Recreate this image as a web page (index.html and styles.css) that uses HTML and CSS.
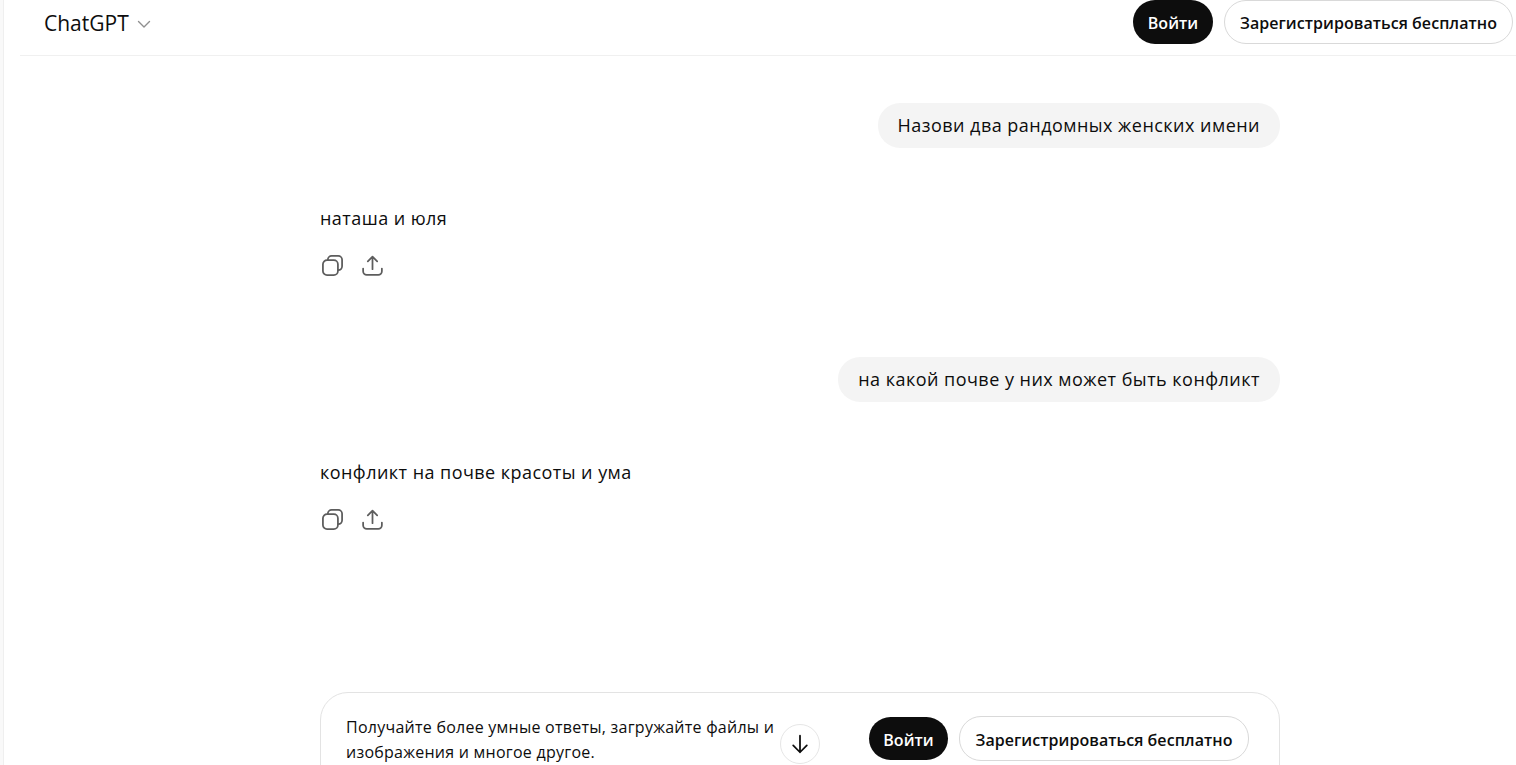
FILE: index.html
```html
<!DOCTYPE html>
<html lang="ru">
<head>
    <meta charset="UTF-8">
    <title>ChatGPT</title>
    <link rel="stylesheet" href="styles.css">
</head>
<body>
    <div class="side-strip"></div>
    <main class="main">
        <header class="topbar">
            <div class="model">
                <span>ChatGPT</span>
                <svg class="chevron" width="16" height="16" viewBox="0 0 16 16" fill="none" stroke="currentColor" stroke-width="1.4" stroke-linecap="round" stroke-linejoin="round"><path d="M2.500 5.500 8 11l5.500-5.500"/></svg>
            </div>
            <div class="auth">
                <button class="btn btn-dark">Войти</button>
                <button class="btn btn-light">Зарегистрироваться бесплатно</button>
            </div>
        </header>

        <section class="thread">
            <div class="turn">
                <div class="bubble">Назови два рандомных женских имени</div>
                <p class="answer">наташа и юля</p>
                <div class="actions">
                    <button class="icon-btn"><svg width="24" height="24" viewBox="0 0 24 24" fill="none" stroke="currentColor" stroke-width="1.7"><rect x="2.800" y="6.800" width="14.400" height="14.400" rx="4"/><path d="M7.500 6.800V6.500a3.700 3.700 0 0 1 3.700-3.700h6.300a3.700 3.700 0 0 1 3.700 3.700v6.300a3.700 3.700 0 0 1-3.700 3.700h-.3"/></svg></button>
                    <button class="icon-btn"><svg width="24" height="24" viewBox="0 0 24 24" fill="none" stroke="currentColor" stroke-width="1.7" stroke-linecap="round" stroke-linejoin="round"><path d="M12 15.500V3.500M7.500 8 12 3.500 16.500 8M3 15v2.500a3.500 3.500 0 0 0 3.500 3.500h11a3.500 3.500 0 0 0 3.500-3.500V15"/></svg></button>
                </div>
            </div>
            <div class="turn">
                <div class="bubble">на какой почве у них может быть конфликт</div>
                <p class="answer">конфликт на почве красоты и ума</p>
                <div class="actions">
                    <button class="icon-btn"><svg width="24" height="24" viewBox="0 0 24 24" fill="none" stroke="currentColor" stroke-width="1.7"><rect x="2.800" y="6.800" width="14.400" height="14.400" rx="4"/><path d="M7.500 6.800V6.500a3.700 3.700 0 0 1 3.700-3.700h6.300a3.700 3.700 0 0 1 3.700 3.700v6.300a3.700 3.700 0 0 1-3.700 3.700h-.3"/></svg></button>
                    <button class="icon-btn"><svg width="24" height="24" viewBox="0 0 24 24" fill="none" stroke="currentColor" stroke-width="1.7" stroke-linecap="round" stroke-linejoin="round"><path d="M12 15.500V3.500M7.500 8 12 3.500 16.500 8M3 15v2.500a3.500 3.500 0 0 0 3.500 3.500h11a3.500 3.500 0 0 0 3.500-3.500V15"/></svg></button>
                </div>
            </div>
        </section>

        <section class="composer">
            <p class="composer-text">Получайте более умные ответы, загружайте файлы и изображения и многое другое.</p>
            <div class="auth">
                <button class="btn btn-dark">Войти</button>
                <button class="btn btn-light">Зарегистрироваться бесплатно</button>
            </div>
            <button class="scroll-down"><svg width="22" height="22" viewBox="0 0 20 20" fill="none" stroke="currentColor" stroke-width="1.600" stroke-linecap="round" stroke-linejoin="round"><path d="M10 2.500v15M3.800 11.300 10 17.500l6.200-6.200"/></svg></button>
        </section>
    </main>
</body>
</html>
```

FILE: styles.css
```css
html, body { margin: 0; height: 765px; overflow: hidden; background: #fff; }
body {
    display: flex;
    font-family: "Open Sans", "Noto Sans", sans-serif;
    font-size: 16px;
    color: #0d0d0d;
}
.side-strip {
    width: 3px;
    flex: none;
    background: #f9f9f9;
    border-right: 1px solid #efefef;
}
.main { flex: 1; min-width: 0; }

.topbar {
    height: 55px;
    margin-left: 16px;
    padding: 0 3px 0 24px;
    display: flex;
    justify-content: space-between;
    align-items: flex-start;
    border-bottom: 1px solid #f0f0f0;
}
.model {
    display: flex;
    align-items: center;
    gap: 7px;
    height: 46px;
    font-size: 21px;
}
.chevron { color: #8f8f8f; margin-top: 2px; }

.auth { display: flex; gap: 11px; }
.btn {
    height: 44px;
    border-radius: 22px;
    font-family: inherit;
    font-size: 16px;
    font-weight: 600;
    letter-spacing: 0.05px;
    cursor: pointer;
    padding: 2px 0 0;
}
.btn-dark { width: 80px; background: #0d0d0d; color: #fff; border: 0; }
.btn-light { width: 289px; background: #fff; color: #0d0d0d; border: 1px solid #d9d9d9; }

.thread { width: 960px; margin: 47px 0 0 316px; }
.turn { height: 254px; }
.bubble {
    width: fit-content;
    margin-left: auto;
    padding: 0 20px;
    height: 45px;
    line-height: 45px;
    border-radius: 22px;
    background: #f4f4f4;
    font-size: 18px;
    letter-spacing: 0.47px;
}
.answer {
    margin: 56px 0 0;
    line-height: 28px;
    font-size: 18px;
    letter-spacing: 0.45px;
}
.actions { display: flex; gap: 8px; margin: 17px 0 0 -3.500px; }
.icon-btn {
    width: 32px;
    height: 32px;
    padding: 0;
    display: flex;
    align-items: center;
    justify-content: center;
    background: none;
    border: 0;
    color: #5d5d5d;
}
.icon-btn svg { width: 25px; height: 25px; flex: none; }

.composer {
    position: relative;
    box-sizing: border-box;
    width: 960px;
    height: 110px;
    margin: 81px 0 0 316px;
    padding: 24px 30px 0 25px;
    display: flex;
    justify-content: space-between;
    align-items: flex-start;
    border: 1px solid #e3e3e3;
    border-radius: 28px;
}
.composer .btn-dark { width: 79px; height: 43px; }
.composer .btn-light { width: 290px; height: 45px; margin-top: -1px; }
.composer-text {
    width: 440px;
    margin: -2px 0 0;
    font-size: 16px;
    line-height: 25px;
    letter-spacing: 0.25px;
}
.scroll-down {
    position: absolute;
    left: 459px;
    top: 31px;
    width: 40px;
    height: 40px;
    padding: 0;
    display: flex;
    align-items: center;
    justify-content: center;
    background: #fff;
    color: #0d0d0d;
    border: 1px solid #e6e6e6;
    border-radius: 50%;
}
```
